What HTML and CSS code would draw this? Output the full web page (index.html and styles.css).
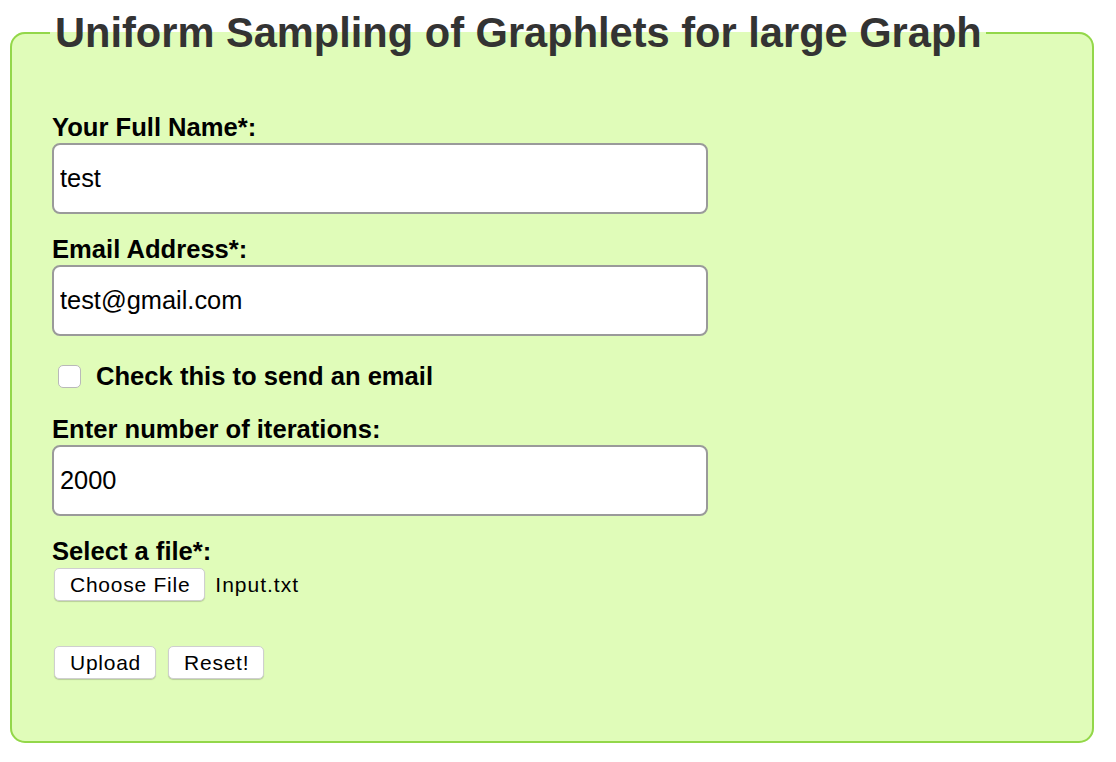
FILE: index.html
```html
<!DOCTYPE html>
<html>
<head>
<meta charset="utf-8">
<title>Uniform Sampling of Graphlets</title>
<link rel="stylesheet" href="styles.css">
</head>
<body>
<fieldset class="panel">
  <legend class="panel-title">Uniform Sampling of Graphlets for large Graph</legend>
  <form class="form">
    <label class="field-label" for="name">Your Full Name*:</label>
    <input class="text-input" id="name" type="text" value="test">

    <label class="field-label spaced" for="email">Email Address*:</label>
    <input class="text-input" id="email" type="text" value="test@gmail.com">

    <div class="check-row">
      <span class="checkbox"></span>
      <span class="check-text">Check this to send an email</span>
    </div>

    <label class="field-label after-check" for="iter">Enter number of iterations:</label>
    <input class="text-input" id="iter" type="text" value="2000">

    <label class="field-label spaced">Select a file*:</label>
    <div class="file-row">
      <span class="btn">Choose File</span>
      <span class="file-name">Input.txt</span>
    </div>

    <div class="actions">
      <span class="btn">Upload</span>
      <span class="btn">Reset!</span>
    </div>
  </form>
</fieldset>
</body>
</html>
```

FILE: styles.css
```css
html, body {
  margin: 0;
  padding: 0;
  background: #ffffff;
}

body {
  padding: 10px 0 0 10px;
  font-family: "Liberation Sans", Arial, sans-serif;
}

.panel {
  box-sizing: border-box;
  width: 1084px;
  height: 733px;
  margin: 0;
  padding: 0 0 0 40px;
  border: 2px solid #93d74a;
  border-radius: 15px;
  background: #e0fcb9;
}

.panel-title {
  padding: 0 4px 0 5px;
  margin-left: -2px;
  font-size: 41.6px;
  font-weight: bold;
  line-height: 46px;
  color: #333333;
}

.form {
  display: flex;
  flex-direction: column;
  align-items: flex-start;
  width: 656px;
  padding-top: 57px;
}

.field-label {
  display: block;
  font-size: 25.6px;
  font-weight: bold;
  line-height: 28px;
  color: #000;
}

.field-label.spaced {
  margin-top: 21px;
}

.field-label.after-check {
  margin-top: 25px;
}

.text-input {
  box-sizing: border-box;
  width: 656px;
  height: 71px;
  margin: 2px 0 0 0;
  padding: 0 6px;
  border: 2px solid #9a9a9a;
  border-radius: 8px;
  background: #fff;
  font-family: "Liberation Sans", Arial, sans-serif;
  font-size: 25.4px;
  color: #000;
  outline: none;
}

.check-row {
  display: flex;
  align-items: flex-start;
  margin-top: 26px;
  height: 28px;
}

.checkbox {
  box-sizing: border-box;
  width: 23px;
  height: 23px;
  margin: 3px 15px 0 6px;
  border: 1px solid #b9b9b9;
  border-radius: 5px;
  background: #fff;
}

.check-text {
  font-size: 25.6px;
  font-weight: bold;
  line-height: 28px;
  color: #000;
}

.file-row {
  display: flex;
  align-items: center;
  gap: 10px;
  margin-top: 3px;
}

.btn {
  box-sizing: border-box;
  display: inline-flex;
  align-items: center;
  height: 33px;
  padding: 0 14px 0 15px;
  margin-left: 2px;
  border: 1px solid #cfcfcf;
  border-radius: 5px;
  background: #fff;
  box-shadow: 0 1px 1px rgba(0, 0, 0, 0.18);
  font-size: 21px;
  letter-spacing: 0.75px;
  color: #000;
}

.file-name {
  font-size: 21px;
  letter-spacing: 1px;
  color: #000;
}

.actions {
  display: flex;
  gap: 10px;
  margin-top: 45px;
}
```
